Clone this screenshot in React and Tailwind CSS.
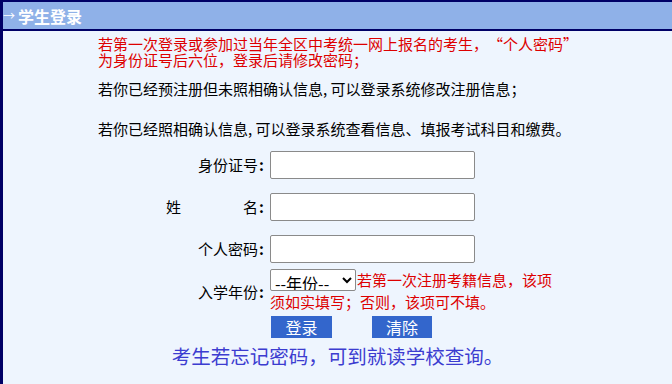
import React from 'react';

const cjk = { fontFamily: '"Noto Sans CJK SC", "Liberation Sans", sans-serif' };

function Colon() {
  return <span className="inline-block w-[9px] text-left font-bold pl-[1px]">:</span>;
}

function Field({ label, children }) {
  return (
    <div className="flex items-center h-[42px]">
      <div className="w-[107px] pr-[3px] text-right text-[15px] text-black">{label}</div>
      {children}
    </div>
  );
}

export default function App() {
  return (
    <div className="w-[672px] h-[384px] overflow-hidden bg-[#eef5fe] border-l-[3px] border-[#000066]" style={cjk}>
      {/* 标题栏 */}
      <div className="h-[31px] bg-[#8fb1e8] border-t-2 border-b-2 border-[#000066] flex items-center text-white font-bold text-[16px] leading-none">
        <span className="text-[12px] font-normal pr-[3px]">→</span>
        <span>学生登录</span>
      </div>

      <div className="pl-[95px] pt-[5px] text-[15px] leading-[16px]">
        <p className="text-[#dd0000]">
          若第一次登录或参加过当年全区中考统一网上报名的考生，
          <span className="inline-block w-[15px] text-right">“</span>个人密码<span className="inline-block w-[15px] text-left">”</span><br />
          为身份证号后六位，登录后请修改密码；
        </p>
        <p className="mt-[13px] text-black">若你已经预注册但未照相确认信息, 可以登录系统修改注册信息；</p>
        <p className="mt-[24px] text-black">若你已经照相确认信息, 可以登录系统查看信息、填报考试科目和缴费。</p>
      </div>

      <div className="pl-[160px] mt-[7px]">
        <Field label={<>身份证号<Colon /></>}>
          <input className="w-[205px] h-[28px] bg-white border border-[#8a8a8a] rounded-[2px]" />
        </Field>
        <Field label={<span className="flex justify-between pl-[3px]"><span>姓</span><span>名<Colon /></span></span>}>
          <input className="w-[205px] h-[28px] bg-white border border-[#8a8a8a] rounded-[2px]" />
        </Field>
        <Field label={<>个人密码<Colon /></>}>
          <input className="w-[205px] h-[28px] bg-white border border-[#8a8a8a] rounded-[2px]" />
        </Field>
        <div className="flex items-center -mt-[1px]">
          <div className="w-[107px] pr-[3px] text-right text-[15px] pt-[4px]">入学年份<Colon /></div>
          <div className="w-[292px] text-[15px] leading-[21px] text-[#dd0000]">
            <select className="h-[22px] w-[86px] bg-white text-black border border-[#8a8a8a] rounded-[2px] text-[16px] leading-none align-top">
              <option>--年份--</option>
            </select>
            <span className="pl-[1px]">若第一次注册考籍信息，该项须如实填写；否则，该项可不填。</span>
          </div>
        </div>
        <div className="flex gap-[40px] pl-[108px] mt-[4px]">
          <button className="w-[61px] h-[22px] bg-[#3366cc] text-white text-[16px] leading-none">登录</button>
          <button className="w-[60px] h-[22px] bg-[#3366cc] text-white text-[16px] leading-none">清除</button>
        </div>
      </div>

      <div className="text-center text-[19.5px] text-[#3c3cd0] mt-[3px]">考生若忘记密码，可到就读学校查询。</div>
    </div>
  );
}
